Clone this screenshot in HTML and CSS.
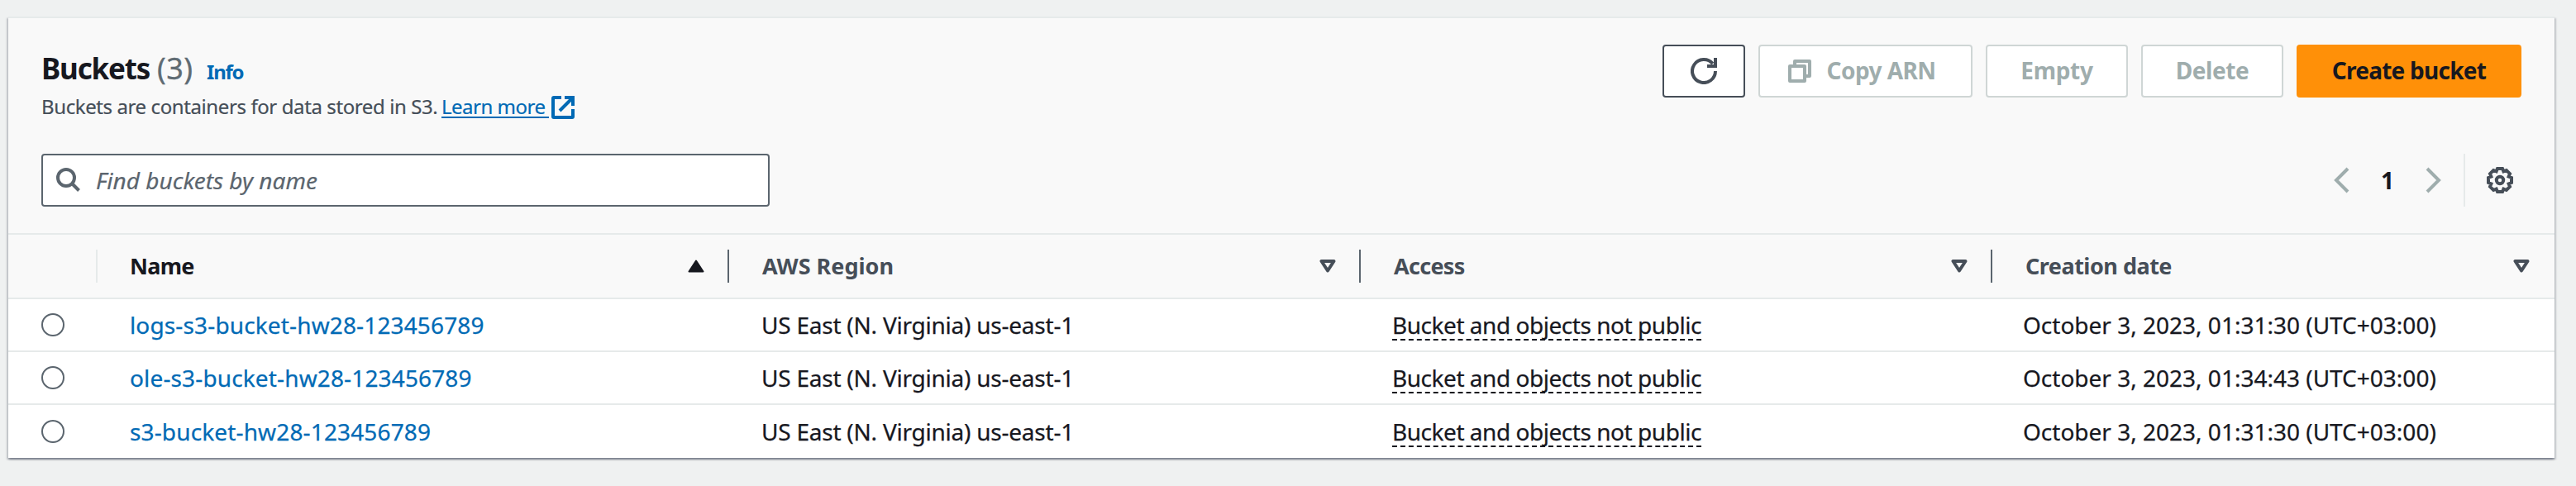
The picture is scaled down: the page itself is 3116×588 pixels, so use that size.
FILE: index.html
```html
<!DOCTYPE html>
<html lang="en">
<head>
<meta charset="utf-8">
<title>Buckets</title>
<link rel="stylesheet" href="styles.css">
</head>
<body>
<main class="card">
  <header class="header">
    <div class="top">
      <div class="heading">
        <h1 class="title"><span class="title-text">Buckets</span><span class="count">(3)</span><a class="info">Info</a></h1>
        <p class="description"><span class="about">Buckets are containers for data stored in S3.</span><a class="learn">Learn more </a><svg class="external" width="28" height="28" viewBox="0 0 28 28"><path d="M12 2H3a1 1 0 0 0-1 1v22a1 1 0 0 0 1 1h22a1 1 0 0 0 1-1v-9M16 2h10v10M10 18 25 3"/></svg></p>
      </div>
      <div class="actions">
        <button class="button refresh"><svg width="32" height="32" viewBox="0 0 32 32"><path d="M30 16a14 14 0 1 1-3.2-8.9M30 0v10H20"/></svg></button>
        <button class="button disabled copy"><svg width="28" height="28" viewBox="0 0 28 28"><path d="M8 8V2h18v18h-6"/><path d="M2 8h18v18H2z"/></svg><span>Copy ARN</span></button>
        <button class="button disabled empty">Empty</button>
        <button class="button disabled delete">Delete</button>
        <button class="button primary">Create bucket</button>
      </div>
    </div>
    <div class="tools">
      <div class="search">
        <svg width="30" height="30" viewBox="0 0 30 30"><circle cx="12" cy="12" r="10"/><path d="m19 19 8.5 8.5"/></svg>
        <span class="placeholder">Find buckets by name</span>
      </div>
      <div class="paging">
        <svg class="chevron" width="20" height="32" viewBox="0 0 20 32"><path d="M18 2 4 16l14 14"/></svg>
        <span class="page">1</span>
        <svg class="chevron" width="20" height="32" viewBox="0 0 20 32"><path d="m2 2 14 14L2 30"/></svg>
        <span class="rule"></span>
        <svg class="gear" width="32" height="32" viewBox="-16 -16 32 32"><path d="M-3-14H3L4.4-10.6 7.8-12 12-7.8 10.6-4.4 14-3V3L10.6 4.4 12 7.8 7.8 12 4.4 10.6 3 14H-3L-4.4 10.6-7.8 12-12 7.8-10.6 4.4-14 3V-3L-10.6-4.4-12-7.8-7.8-12-4.4-10.6Z"/><circle r="4.2"/></svg>
      </div>
    </div>
  </header>
  <section class="table">
    <div class="row head">
      <div class="cell pick"></div>
      <div class="cell name sorted"><span>Name</span><svg class="sort" width="20" height="16" viewBox="0 0 20 16"><path d="M10 1.5 18.5 14.5h-17z"/></svg></div>
      <div class="cell region"><span>AWS Region</span><svg class="sort" width="20" height="16" viewBox="0 0 20 16"><path d="M2.5 2h15L10 13.5z"/></svg></div>
      <div class="cell access"><span>Access</span><svg class="sort" width="20" height="16" viewBox="0 0 20 16"><path d="M2.5 2h15L10 13.5z"/></svg></div>
      <div class="cell created"><span>Creation date</span><svg class="sort" width="20" height="16" viewBox="0 0 20 16"><path d="M2.5 2h15L10 13.5z"/></svg></div>
    </div>
    <div class="row">
      <div class="cell pick"><span class="radio"></span></div>
      <div class="cell name"><a>logs-s3-bucket-hw28-123456789</a></div>
      <div class="cell region">US East (N. Virginia) us-east-1</div>
      <div class="cell access"><span class="hint">Bucket and objects not public</span></div>
      <div class="cell created">October 3, 2023, 01:31:30 (UTC+03:00)</div>
    </div>
    <div class="row">
      <div class="cell pick"><span class="radio"></span></div>
      <div class="cell name"><a>ole-s3-bucket-hw28-123456789</a></div>
      <div class="cell region">US East (N. Virginia) us-east-1</div>
      <div class="cell access"><span class="hint">Bucket and objects not public</span></div>
      <div class="cell created">October 3, 2023, 01:34:43 (UTC+03:00)</div>
    </div>
    <div class="row">
      <div class="cell pick"><span class="radio"></span></div>
      <div class="cell name"><a>s3-bucket-hw28-123456789</a></div>
      <div class="cell region">US East (N. Virginia) us-east-1</div>
      <div class="cell access"><span class="hint">Bucket and objects not public</span></div>
      <div class="cell created">October 3, 2023, 01:31:30 (UTC+03:00)</div>
    </div>
  </section>
</main>
</body>
</html>
```
FILE: styles.css
```css
* { box-sizing: border-box; }

body {
  margin: 0;
  padding: 20px 26px 34px 10px;
  background: #eff1f1;
  color: #17181f;
  font: 28px/36px "Noto Sans", "Open Sans", sans-serif;
}

svg { display: block; flex: none; fill: none; stroke: currentColor; stroke-width: 4; }

.card {
  height: 534px;
  background: #fff;
  border-top: 2px solid #e6eaea;
  box-shadow: 0 2px 2px rgba(0, 13, 36, .3), 2px 2px 2px rgba(0, 13, 36, .15), -2px 2px 2px rgba(0, 13, 36, .15);
}

.header {
  height: 262px;
  padding: 32px 40px 0;
  background: #f9f9f9;
  border-bottom: 2px solid #e6eaea;
}

.top { display: flex; justify-content: space-between; height: 132px; }

.heading { padding-top: 7px; }

.title {
  display: flex;
  align-items: baseline;
  height: 44px;
  margin: 0;
  font-size: 35px;
  line-height: 44px;
}
.title-text { width: 140px; letter-spacing: -1.2px; }
.count { width: 60px; color: #5f6b73; font-size: 36px; font-weight: 400; letter-spacing: .4px; -webkit-text-stroke: .3px; }
.info { color: #006ab5; font-size: 24px; letter-spacing: -1.2px; }

.description {
  display: flex;
  margin: 1px 0 0;
  color: #454e58;
  font-size: 24px;
  line-height: 46px;
  -webkit-text-stroke: .2px;
}
.about { width: 484px; letter-spacing: -.4px; white-space: nowrap; }
.learn {
  width: 130px;
  height: 37px;
  border-bottom: 2px solid #006ab5;
  color: #006ab5;
  letter-spacing: -.5px;
}
.external { margin: 10px 0 0 3px; color: #006ab5; }

.actions { display: flex; gap: 16px; }
.button {
  display: flex;
  align-items: center;
  justify-content: center;
  height: 64px;
  padding: 0 0 2px;
  background: #fff;
  border: 2px solid #464e58;
  border-radius: 4px;
  color: #464e58;
  font: 700 28px/36px "Noto Sans", sans-serif;
}
.refresh { width: 100px; padding: 0; }
.disabled { border-color: #cfd6d5; color: #9fadad; }
.copy { width: 259px; gap: 19px; letter-spacing: -.55px; padding: 0 9px 0 0; }
.copy svg { stroke-linejoin: round; }
.copy span { padding-bottom: 2px; }
.empty { width: 172px; letter-spacing: -.3px; }
.delete { width: 172px; letter-spacing: -.45px; }
.primary { width: 272px; background: #ff9008; border-color: #ff9008; color: #17181f; letter-spacing: -.75px; }

.tools { display: flex; justify-content: space-between; height: 64px; }
.search {
  display: flex;
  align-items: center;
  gap: 18px;
  width: 881px;
  padding-left: 16px;
  background: #fff;
  border: 2px solid #5b656e;
  border-radius: 4px;
  color: #5b656e;
}
.placeholder { font-style: italic; letter-spacing: 0; -webkit-text-stroke: .2px; }

.paging { display: flex; align-items: center; padding-right: 10px; color: #464e58; }
.chevron { color: #9fadad; }
.page { width: 92px; color: #17181f; font-weight: 700; text-align: center; }
.rule { width: 2px; height: 64px; margin: 0 26px 0 26px; background: #e6eaea; }

.row {
  display: grid;
  grid-template-columns: 108px 764px 764px 764px 1fr;
  height: 64px;
  border-bottom: 2px solid #e6eaea;
  -webkit-text-stroke: .25px;
}
.row:last-child { border-bottom: 0; }
.cell { display: flex; align-items: center; white-space: nowrap; }
.pick { padding-left: 40px; }
.radio { width: 28px; height: 28px; border: 2px solid #5b656e; border-radius: 50%; }
.name { padding-left: 39px; color: #006ab5; letter-spacing: .14px; }
.region { padding-left: 39px; letter-spacing: -.23px; }
.access { padding-left: 38px; }
.created { padding-left: 37px; }
.hint {
  height: 36px;
  margin-top: 2px;
  border-bottom: 2px dashed #17181f;
  line-height: 34px;
  letter-spacing: -.46px;
}

.head {
  height: 78px;
  background: #f9f9f9;
  color: #464e58;
  font-size: 27px;
  font-weight: 700;
  -webkit-text-stroke: 0;
}
.head .cell {
  justify-content: space-between;
  height: 40px;
  margin-top: 18px;
  padding-right: 28px;
  border-right: 2px solid #5b656e;
}
.head .pick { border-color: #e6eaea; }
.head .name { padding-left: 39px; color: #17181f; letter-spacing: -.7px; }
.head .region { padding-left: 40px; letter-spacing: 0; }
.head .access { padding-left: 40px; letter-spacing: -.7px; }
.head .created { padding: 0 30px 0 40px; border: 0; letter-spacing: -.5px; }
.sort { stroke-width: 4; stroke-linejoin: round; }
.sorted .sort { fill: currentColor; stroke-width: 2; }
```
